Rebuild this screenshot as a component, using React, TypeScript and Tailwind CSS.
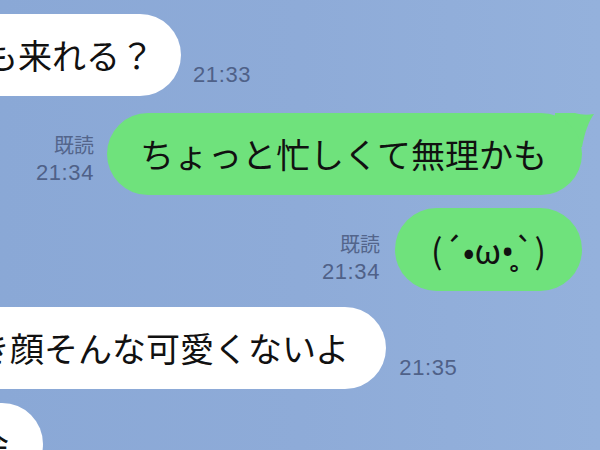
const jp = "font-['Noto_Sans_CJK_JP','Noto_Sans',sans-serif]";
const num = "font-['Liberation_Sans','Noto_Sans_CJK_JP',sans-serif]";

function Time({ t }: { t: string }) {
  return <div className={`${num} text-[22px] leading-none tracking-[0.6px] text-[#4f6188]`}>{t}</div>;
}

function Read({ t }: { t: string }) {
  return (
    <div className="flex flex-col items-end">
      <div className={`${jp} text-[20px] leading-none text-[#53658b] mb-[7px]`}>既読</div>
      <Time t={t} />
    </div>
  );
}

export default function App() {
  return (
    <div className="w-[600px] h-[450px] overflow-hidden bg-gradient-to-r from-[#8aa8d6] via-[#8eabd8] to-[#94b1dc] flex flex-col">
      {/* received */}
      <div className="flex items-end mt-[14px]">
        <div className={`${jp} ml-[-50px] bg-white rounded-full h-[82px] pl-[34px] pr-[27px] flex items-center text-[34px] leading-[40px] text-[#111] whitespace-nowrap`}>
          も来れる？
        </div>
        <div className="ml-[12px] mb-[10px]">
          <Time t="21:33" />
        </div>
      </div>

      {/* sent with tail */}
      <div className="flex items-end justify-end mt-[17px] pr-[18px]">
        <div className="mr-[13px] mb-[11px]">
          <Read t="21:34" />
        </div>
        <div className="relative">
          <svg className="absolute right-[-13px] top-0" width="40" height="34" viewBox="0 0 40 34">
            <path d="M0 0 L20 0 C27 2 32 2 39 1 C34 8 30 18 27 34 L0 34 Z" fill="#6fe27c" />
          </svg>
          <div className={`${jp} relative bg-[#6fe27c] rounded-full h-[82px] pl-[33px] pr-[35px] flex items-center text-[34px] leading-[40px] text-[#111] whitespace-nowrap`}>
            ちょっと忙しくて無理かも
          </div>
        </div>
      </div>

      {/* sent kaomoji */}
      <div className="flex items-end justify-end mt-[13px] pr-[18px]">
        <div className="mr-[15px] mb-[8px]">
          <Read t="21:34" />
        </div>
        <div className={`${jp} bg-[#6fe27c] rounded-full h-[83px] w-[187px] flex items-center justify-center text-[34px] leading-[40px] text-[#111] whitespace-nowrap`}>
          (´•ω•̥`)
        </div>
      </div>

      {/* received */}
      <div className="flex items-end mt-[16px]">
        <div className={`${jp} ml-[-58px] bg-white rounded-full h-[82px] pl-[34px] pr-[37px] flex items-center text-[34px] leading-[40px] text-[#111] whitespace-nowrap`}>
          き顔そんな可愛くないよ
        </div>
        <div className="ml-[13px] mb-[10px]">
          <Time t="21:35" />
        </div>
      </div>

      {/* received, cut off */}
      <div className="flex items-end mt-[14px]">
        <div className={`${jp} ml-[-59px] bg-white rounded-full h-[82px] pl-[34px] pr-[34px] flex items-center text-[34px] leading-[40px] text-[#111] whitespace-nowrap`}>
          会
        </div>
      </div>
    </div>
  );
}
